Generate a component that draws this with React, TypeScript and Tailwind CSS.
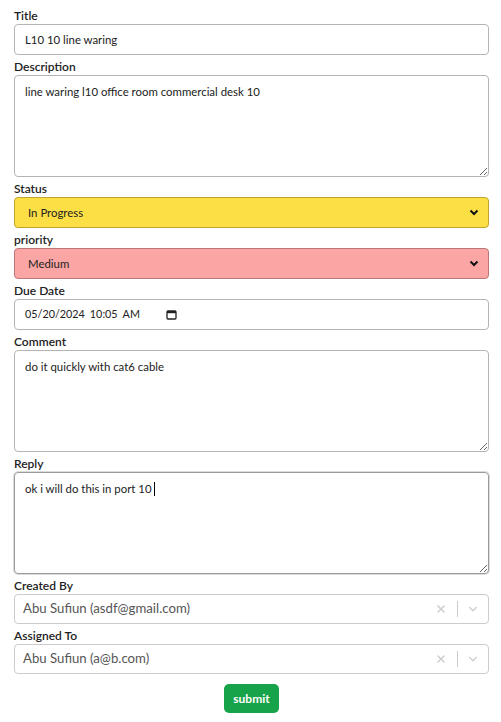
import { ChevronDown, X } from 'lucide-react'

const font = { fontFamily: 'Lato, "Open Sans", sans-serif' }

function Field({ label, children }: { label: string; children: React.ReactNode }) {
  return (
    <div className="flex flex-col">
      <label className="text-[12px] leading-4 font-semibold text-[#222]">{label}</label>
      {children}
    </div>
  )
}

function ColorSelect({ value, className }: { value: string; className: string }) {
  return (
    <div className={`flex h-[31px] items-center justify-between rounded-[4px] border pl-[13px] pr-[8px] text-[11.4px] text-[#222] ${className}`}>
      <span>{value}</span>
      <svg width="10" height="7" viewBox="0 0 10 7" className="mr-[1px]">
        <path d="M1.5 1.5 L5 5 L8.5 1.5" fill="none" stroke="#111" strokeWidth="2" />
      </svg>
    </div>
  )
}

function PersonSelect({ value }: { value: string }) {
  return (
    <div className="flex h-[30px] items-center rounded-[4px] border border-[#cccccc] bg-white">
      <span className="flex-1 pl-[8px] text-[13.2px] text-[#555]">{value}</span>
      <div className="flex items-center">
        <X size={12} strokeWidth={3} className="mx-[10px] text-[#cccccc]" />
        <span className="h-[16px] w-px bg-[#cccccc]" />
        <ChevronDown size={14} strokeWidth={2} className="mx-[8px] text-[#cccccc]" />
      </div>
    </div>
  )
}

export default function App() {
  return (
    <div style={font} className="min-h-screen bg-white pl-[14px] pr-[12px] pt-2">
      <form className="flex flex-col gap-1">
        <Field label="Title">
          <input
            readOnly
            value="L10 10 line waring"
            className="h-[31px] rounded-[4px] border border-[#b4b4b4] px-[10px] text-[11.4px] text-[#222] outline-none"
          />
        </Field>

        <Field label="Description">
          <textarea
            readOnly
            value="line waring l10 office room commercial desk 10"
            className="h-[102px] rounded-[4px] border border-[#b4b4b4] px-[10px] py-[7px] text-[11.4px] text-[#222] outline-none"
          />
        </Field>

        <Field label="Status">
          <ColorSelect value="In Progress" className="border-[#c2a32e] bg-[#fcdf45]" />
        </Field>

        <Field label="priority">
          <ColorSelect value="Medium" className="border-[#bb7777] bg-[#fba5a5]" />
        </Field>

        <Field label="Due Date">
          <div className="flex h-[31px] items-center rounded-[4px] border border-[#b4b4b4] pl-[10px] text-[10.8px] text-[#222]">
            <span>05/20/2024</span>
            <span className="ml-[5px]">10:05</span>
            <span className="ml-[5px]">AM</span>
            <svg width="11" height="10" viewBox="0 0 11 10" className="ml-[26px]">
              <rect x="1" y="1" width="9" height="8" rx="1" fill="none" stroke="#222" strokeWidth="1.3" />
              <rect x="1" y="1" width="9" height="2.2" fill="#222" />
            </svg>
          </div>
        </Field>

        <Field label="Comment">
          <textarea
            readOnly
            value="do it quickly with cat6 cable"
            className="h-[102px] rounded-[4px] border border-[#b4b4b4] px-[10px] py-[7px] text-[11.4px] text-[#222] outline-none"
          />
        </Field>

        <Field label="Reply">
          <div className="relative flex">
            <textarea
              readOnly
              value="ok i will do this in port 10"
              className="h-[102px] w-full rounded-[4px] border border-[#9a9a9a] px-[10px] py-[7px] text-[11.4px] text-[#222] shadow-[0_0_0_1px_#dcdcdc] outline-none"
            />
            {/* caret overlay */}
            <div className="pointer-events-none absolute inset-0 border border-transparent px-[10px] py-[7px] text-[11.4px] text-transparent">
              ok i will do this in port 10<span className="ml-[2px] inline-block h-[14px] w-px bg-black align-[-3px]" />
            </div>
          </div>
        </Field>

        <Field label="Created By">
          <PersonSelect value="Abu Sufiun (asdf@gmail.com)" />
        </Field>

        <Field label="Assigned To">
          <PersonSelect value="Abu Sufiun (a@b.com)" />
        </Field>

        <div className="mt-[6px] flex justify-center">
          <button type="button" className="h-[29px] rounded-[5px] bg-[#17a34a] px-[9px] text-[12px] font-bold text-white">
            submit
          </button>
        </div>
      </form>
    </div>
  )
}
